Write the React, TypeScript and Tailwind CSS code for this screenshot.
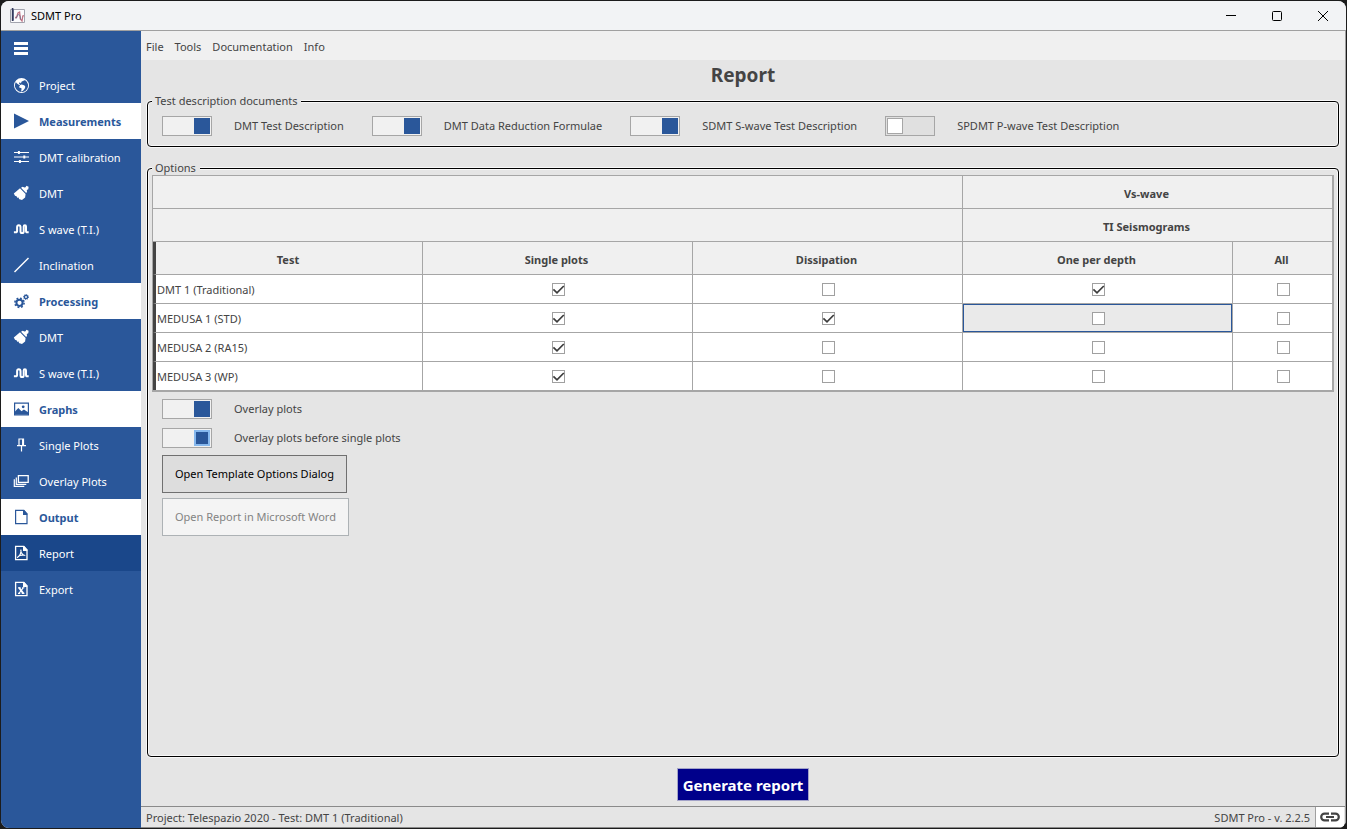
import type { ReactNode } from 'react';
import { BsGlobeAmericas } from 'react-icons/bs';

function Svg({ children }: { children: ReactNode }) {
  return (
    <svg
      viewBox="0 0 16 16"
      className="size-4 shrink-0"
      fill="none"
      stroke="currentColor"
      strokeWidth="1.2"
      aria-hidden="true"
    >
      {children}
    </svg>
  );
}

const MenuIcon = () => (
  <Svg>
    <path fill="currentColor" stroke="none" d="M1 1h14v3H1zM1 6h14v3H1zM1 11h14v3H1z" />
  </Svg>
);

const PlayIcon = () => (
  <Svg>
    <path fill="currentColor" stroke="none" d="M1 .5 16 8 1 15.5z" />
  </Svg>
);

const TuneIcon = () => (
  <Svg>
    <path d="M1 3.5h15M1 8h15M1 12.5h15" strokeWidth="1.2" />
    <path fill="currentColor" stroke="none" d="M4.9 2h2v3h-2zM10.3 6.5h2v3h-2zM5.9 11h2v3h-2z" />
  </Svg>
);

const BladeIcon = () => (
  <Svg>
    <path
      fill="currentColor"
      stroke="none"
      d="M7 3.3 12.6 9 12.1 12.4 9 14.9 5.8 13.9 6.1 12.4 4.6 13 3.8 11.4 2 10.7.8 8.6z"
    />
    <path fill="currentColor" stroke="none" d="M8 2.7 9.7 1.7 11.4 2.6 12.6 2.3 13.4.8 15.6 1.7 15.3 4.2 13.8 4.9 14 7 13.1 8z" />
  </Svg>
);

const WaveIcon = () => (
  <Svg>
    <path
      d="M.9 11.3h1.6c1.2 0 1.6-.6 1.6-1.6V6.2c0-1.2.6-1.9 1.7-1.9s1.7.7 1.7 1.9v4c0 1.2.6 1.9 1.6 1.9s1.6-.7 1.6-1.9V5.6c0-.9.5-1.4 1.2-1.4s1.1.5 1.1 1.4v4.1c0 1 .4 1.6 1.4 1.6h1.3"
      strokeWidth="2"
    />
  </Svg>
);

const SlopeIcon = () => (
  <Svg>
    <path d="M1.5 15 15.5 1" strokeWidth="1.4" />
  </Svg>
);

const GearsIcon = () => (
  <Svg>
    <circle cx="6.5" cy="9.8" r="3.1" strokeWidth="2" />
    <circle cx="6.5" cy="9.8" r="4.6" strokeWidth="1.6" strokeDasharray="1.81 1.8" />
    <circle cx="13" cy="4" r="1.6" strokeWidth="1.4" />
    <circle cx="13" cy="4" r="2.5" strokeWidth="1" strokeDasharray=".98 .98" />
  </Svg>
);

const ImageIcon = () => (
  <Svg>
    <path d="M1.6 2.2h13.8v11.6H1.6z" strokeWidth="1.2" />
    <path fill="currentColor" stroke="none" d="M2 10.6 5.3 7l3.2 3.2 2.4-1.6 4.2 2.6v2.3H2z" />
    <circle cx="10.2" cy="5.8" r="1.4" fill="currentColor" stroke="none" />
  </Svg>
);

const PinIcon = () => (
  <Svg>
    <path d="M6 8V2h4.5v6M4 8.6h9M8.5 9v5.5" strokeWidth="1.2" />
    <path d="M9.8 2v6" strokeWidth="1.5" />
  </Svg>
);

const LayersIcon = () => (
  <Svg>
    <path d="M5.4 2.6h9.8v6.8H5.4z" strokeWidth="1.3" />
    <path d="M3.3 4.4v7h10M1.3 6.2v7.2h10" strokeWidth="1.2" />
  </Svg>
);

const FileIcon = () => (
  <Svg>
    <path d="M2.6 1.3h8.2l3.2 3.6v9.8H2.6z" />
    <path fill="currentColor" stroke="none" d="M10 1h1.1l3.2 3.5V6H10z" />
  </Svg>
);

const PdfIcon = () => (
  <Svg>
    <path d="M2.6 1.3h8.2l3.2 3.6v9.8H2.6z" strokeWidth="1.3" />
    <path fill="currentColor" stroke="none" d="M10 1h1.1l3.2 3.5V6H10z" />
    <path d="M7.7 4.6c.2 3.4 1.2 5.6 4.6 5.9M8 4.8c.1 3.4-1.4 6.6-4 7.9M4.8 11.6c1.6-1.2 4-1.8 7-1.3" strokeWidth="1.1" />
  </Svg>
);

const ExcelIcon = () => (
  <Svg>
    <path d="M2.6 1.3h8.2l3.2 3.6v9.8H2.6z" strokeWidth="1.3" />
    <path fill="currentColor" stroke="none" d="M10 1h1.1l3.2 3.5V6H10z" />
    <path d="M6 6.6 10.3 12.4" strokeWidth="1.8" />
    <path d="M10.4 6.6 5.9 12.4M5 6.7h2.6M9 6.7h2.4M5 12.4h2.2M8.8 12.4h2.6" strokeWidth="1.1" />
  </Svg>
);

const GlobeIcon = () => <BsGlobeAmericas className="size-4 shrink-0 pt-px pl-px" aria-hidden="true" />;

const AppIcon = () => (
  <svg viewBox="0 0 16 16" className="size-4" fill="none" aria-hidden="true">
    <path d="M1.5 1.5h14v13h-14z" fill="#fbfbfd" stroke="#a2a4ae" />
    <path d="M3 1v11.5h2V1z" fill="#7d86a4" />
    <path d="M3.6 0v13" stroke="#343a5c" strokeWidth="1.6" />
    <path d="M6 9.5h1.5L9 5l1.6-1 .8 7 1.6 2 .8-5 1.2-.4" stroke="#c07484" strokeWidth="1.3" />
    <path d="M7 10.5 9 6.5l2 1 .6 4" stroke="#6c6f8e" strokeWidth=".8" />
  </svg>
);

type NavItem = { label: string; Icon: () => ReactNode; kind?: 'section' | 'active' };

const nav: NavItem[] = [
  { label: 'Project', Icon: GlobeIcon },
  { label: 'Measurements', Icon: PlayIcon, kind: 'section' },
  { label: 'DMT calibration', Icon: TuneIcon },
  { label: 'DMT', Icon: BladeIcon },
  { label: 'S wave (T.I.)', Icon: WaveIcon },
  { label: 'Inclination', Icon: SlopeIcon },
  { label: 'Processing', Icon: GearsIcon, kind: 'section' },
  { label: 'DMT', Icon: BladeIcon },
  { label: 'S wave (T.I.)', Icon: WaveIcon },
  { label: 'Graphs', Icon: ImageIcon, kind: 'section' },
  { label: 'Single Plots', Icon: PinIcon },
  { label: 'Overlay Plots', Icon: LayersIcon },
  { label: 'Output', Icon: FileIcon, kind: 'section' },
  { label: 'Report', Icon: PdfIcon, kind: 'active' },
  { label: 'Export', Icon: ExcelIcon },
];

const navStyles = {
  item: 'text-white',
  section: 'bg-white font-bold text-[#2a579a]',
  active: 'bg-[#1a478a] text-white',
};

function Toggle({ label, on = false, focused = false }: { label: string; on?: boolean; focused?: boolean }) {
  return (
    <label className="flex items-center gap-[22px]">
      <input
        type="checkbox"
        defaultChecked={on}
        className={`flex h-5 w-[50px] shrink-0 appearance-none items-center border border-[#a6a6a6] bg-[#e0e0e0] px-px before:block before:size-4 before:border before:border-[#a6a6a6] before:bg-white checked:justify-end checked:bg-[#f1f1f1] checked:before:bg-[#2a579a] ${
          focused ? 'checked:before:border-2 checked:before:border-[#86b8ee]' : 'checked:before:border-[#2a579a]'
        }`}
      />
      <span>{label}</span>
    </label>
  );
}

function Group({ title, className, children }: { title: string; className: string; children: ReactNode }) {
  return (
    <fieldset
      className={`min-w-0 rounded-[4px] border border-black shadow-[0_0_0_1px_#f8f8f8,inset_0_0_0_1px_#f8f8f8] ${className}`}
    >
      <legend className="ml-1 bg-[#e5e5e5] pr-1 pl-[3px] leading-[14px]">{title}</legend>
      {children}
    </fieldset>
  );
}

function Check({ label, on }: { label: string; on: boolean }) {
  return (
    <span className="mx-auto grid size-[13px]">
      <input
        type="checkbox"
        aria-label={label}
        defaultChecked={on}
        className="peer col-start-1 row-start-1 size-[13px] appearance-none border border-[#a0a0a0] bg-white"
      />
      <svg
        viewBox="0 0 13 13"
        className="pointer-events-none invisible col-start-1 row-start-1 size-[13px] peer-checked:visible"
        fill="none"
        stroke="#3c3c3c"
        strokeWidth="1.7"
        aria-hidden="true"
      >
        <path d="M1.4 6.3 5 9.8 11.8 3" />
      </svg>
    </span>
  );
}

const columns = ['Single plots', 'Dissipation', 'One per depth', 'All'];
const rows = [
  { name: 'DMT 1 (Traditional)', checks: [true, false, true, false] },
  { name: 'MEDUSA 1 (STD)', checks: [true, true, false, false] },
  { name: 'MEDUSA 2 (RA15)', checks: [true, false, false, false] },
  { name: 'MEDUSA 3 (WP)', checks: [true, false, false, false] },
];

const headCell = 'h-[33px] border-r border-b border-[#a6a6a6] pt-[3px] pr-[2px] pb-0 pl-0 font-bold last:border-r-0';
const bodyCell = 'h-[29px] border-r border-b border-[#a6a6a6] pr-0 pb-0 last:border-r-0 group-last:h-7 group-last:border-b-0';

function OptionsTable() {
  return (
    <table className="w-full table-fixed border-separate border-spacing-0 border border-r-2 border-b-2 border-[#a6a6a6]">
      <colgroup>
        <col />
        <col />
        <col />
        <col />
        <col className="w-[99px]" />
      </colgroup>
      <thead className="bg-[#f0f0f0]">
        <tr>
          <td colSpan={3} className={headCell} />
          <th colSpan={2} className={headCell}>Vs-wave</th>
        </tr>
        <tr>
          <td colSpan={3} className={headCell} />
          <th colSpan={2} className={headCell}>TI Seismograms</th>
        </tr>
        <tr>
          <th className={`${headCell} border-l-[3px] border-l-[#444444]`}>Test</th>
          {columns.map((c) => (
            <th key={c} className={headCell}>{c}</th>
          ))}
        </tr>
      </thead>
      <tbody className="bg-white">
        {rows.map((row, r) => (
          <tr key={row.name} className="group">
            <td className={`${bodyCell} border-l-[3px] border-l-[#444444] pt-[2px] pl-px`}>{row.name}</td>
            {row.checks.map((on, c) => (
              <td
                key={columns[c]}
                className={`${bodyCell} pt-0 pl-[2px] ${
                  r === 1 && c === 2 ? 'bg-[#eaeaea] shadow-[inset_0_0_0_1px_#2a579a]' : ''
                }`}
              >
                <Check label={`${row.name}: ${columns[c]}`} on={on} />
              </td>
            ))}
          </tr>
        ))}
      </tbody>
    </table>
  );
}

export default function App() {
  return (
    <div className="flex h-screen flex-col bg-[#1c1c1c] p-px font-['Noto_Sans','Open_Sans',sans-serif] text-[11px] leading-4 text-[#444444]">
      <div className="flex min-h-0 flex-1 flex-col overflow-hidden rounded-lg bg-[#e5e5e5]">
        <header className="flex h-[30px] shrink-0 items-center border-b border-[#a0a0a0] bg-[#f2f3f5] pl-2 text-black">
          <AppIcon />
          <h1 className="ml-[6px] flex-1">SDMT Pro</h1>
          <button type="button" aria-label="Minimize" className="grid h-full w-[46px] place-items-center">
            <svg viewBox="0 0 12 12" className="size-3" stroke="currentColor" aria-hidden="true">
              <path d="M1 5.5h10" />
            </svg>
          </button>
          <button type="button" aria-label="Maximize" className="grid h-full w-[46px] place-items-center">
            <svg viewBox="0 0 12 12" className="size-3" fill="none" stroke="currentColor" aria-hidden="true">
              <rect x="1.5" y="1.5" width="9" height="9" rx="1" />
            </svg>
          </button>
          <button type="button" aria-label="Close" className="grid h-full w-[46px] place-items-center">
            <svg viewBox="0 0 12 12" className="size-3" stroke="currentColor" aria-hidden="true">
              <path d="m1 1 10 10M11 1 1 11" />
            </svg>
          </button>
        </header>

        <div className="flex min-h-0 flex-1">
          <nav className="w-[140px] shrink-0 bg-[#2a579a]">
            <button type="button" aria-label="Toggle menu" className="flex h-9 w-full items-center pl-3 text-white">
              <MenuIcon />
            </button>
            <ul>
              {nav.map(({ label, Icon, kind }, i) => (
                <li key={i}>
                  <a href="#" className={`flex h-9 items-center gap-[10px] pl-3 ${navStyles[kind ?? 'item']}`}>
                    <Icon />
                    <span className="pt-px">{label}</span>
                  </a>
                </li>
              ))}
            </ul>
          </nav>

          <div className="flex min-w-0 flex-1 flex-col border-r border-[#a0a0a0]">
            <div className="flex h-[29px] shrink-0 items-center gap-[11px] bg-[#f0f0f0] px-[5px] pt-[2px]">
              <button type="button">File</button>
              <button type="button">Tools</button>
              <button type="button">Documentation</button>
              <button type="button">Info</button>
            </div>

            <main className="flex min-h-0 flex-1 flex-col px-[6px]">
              <h2 className="py-[3px] text-center text-[19px] leading-6 font-bold">Report</h2>
              <Group title="Test description documents" className="mt-1 h-[53px]">
                <div className="flex gap-7 pt-2 pl-[14px]">
                  <Toggle label="DMT Test Description" on />
                  <Toggle label="DMT Data Reduction Formulae" on />
                  <Toggle label="SDMT S-wave Test Description" on />
                  <Toggle label="SPDMT P-wave Test Description" />
                </div>
              </Group>
              <Group title="Options" className="mt-[14px] flex-1">
                <div className="px-1">
                  <OptionsTable />
                </div>
                <div className="flex flex-col items-start gap-[9px] pt-[7px] pl-[14px]">
                  <Toggle label="Overlay plots" on />
                  <Toggle label="Overlay plots before single plots" on focused />
                </div>
                <div className="flex flex-col items-start gap-[5px] pt-[7px] pl-[14px]">
                  <button type="button" className="h-[38px] border border-[#707070] bg-[#dddddd] px-3 text-black">
                    Open Template Options Dialog
                  </button>
                  <button
                    type="button"
                    disabled
                    className="h-[38px] border border-[#adb2b5] bg-[#f4f4f4] px-3 text-[#838383]"
                  >
                    Open Report in Microsoft Word
                  </button>
                </div>
              </Group>
              <button
                type="button"
                className="mt-[11px] mb-[5px] h-[33px] self-center border border-[#a3a3c8] bg-[#00008b] px-[5px] text-[15px] font-bold text-white"
              >
                Generate report
              </button>
            </main>

            <footer className="flex h-[22px] shrink-0 items-stretch border-t border-b border-[#8a8a8a] pl-[5px]">
              <span className="flex-1 self-center pt-px">Project: Telespazio 2020 - Test: DMT 1 (Traditional)</span>
              <span className="self-center pt-px pr-[5px]">SDMT Pro - v. 2.2.5</span>
              <button
                type="button"
                aria-label="Connection"
                className="mr-px grid w-[29px] place-items-center border-l border-[#a0a0a0] bg-white"
              >
                <svg viewBox="0 0 20 10" className="h-[10px] w-5" fill="none" stroke="#444444" strokeWidth="2.2" aria-hidden="true">
                  <path d="M9 1.6H4.6a3.4 3.4 0 0 0 0 6.8H9M11 1.6h4.4a3.4 3.4 0 0 1 0 6.8H11M6 5h8" />
                </svg>
              </button>
            </footer>
          </div>
        </div>
      </div>
    </div>
  );
}
